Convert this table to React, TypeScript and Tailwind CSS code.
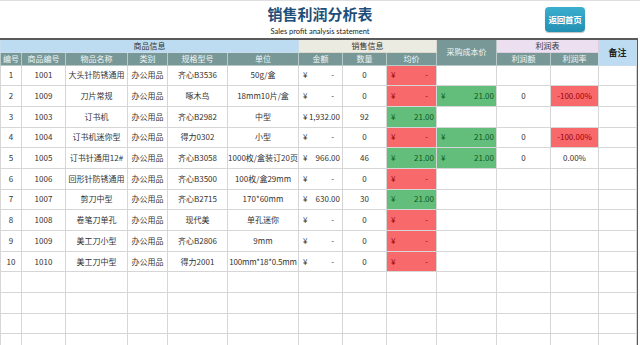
import { Fragment } from "react";

type Row = {
  no: string;
  code: string;
  name: string;
  cat: string;
  spec: string;
  unit: string;
  amount: string;
  qty: string;
  avg: "red" | "green";
  avgValue: string;
  cost?: string;
  profit?: string;
  rate?: string;
  rateRed?: boolean;
};

const rows: Row[] = [
  { no: "1", code: "1001", name: "大头针防锈通用", cat: "办公用品", spec: "齐心B3536", unit: "50g/盒", amount: "-", qty: "0", avg: "red", avgValue: "-" },
  { no: "2", code: "1009", name: "刀片常规", cat: "办公用品", spec: "啄木鸟", unit: "18mm10片/盒", amount: "-", qty: "0", avg: "red", avgValue: "-", cost: "21.00", profit: "0", rate: "-100.00%", rateRed: true },
  { no: "3", code: "1003", name: "订书机", cat: "办公用品", spec: "齐心B2982", unit: "中型", amount: "1,932.00", qty: "92", avg: "green", avgValue: "21.00" },
  { no: "4", code: "1004", name: "订书机迷你型", cat: "办公用品", spec: "得力0302", unit: "小型", amount: "-", qty: "0", avg: "red", avgValue: "-", cost: "21.00", profit: "0", rate: "-100.00%", rateRed: true },
  { no: "5", code: "1005", name: "订书针通用12#", cat: "办公用品", spec: "齐心B3058", unit: "1000枚/盒装订20页", amount: "966.00", qty: "46", avg: "green", avgValue: "21.00", cost: "21.00", profit: "0", rate: "0.00%" },
  { no: "6", code: "1006", name: "回形针防锈通用", cat: "办公用品", spec: "齐心B3500", unit: "100枚/盒29mm", amount: "-", qty: "0", avg: "red", avgValue: "-" },
  { no: "7", code: "1007", name: "剪刀中型", cat: "办公用品", spec: "齐心B2715", unit: "170*60mm", amount: "630.00", qty: "30", avg: "green", avgValue: "21.00" },
  { no: "8", code: "1008", name: "卷笔刀单孔", cat: "办公用品", spec: "现代美", unit: "单孔迷你", amount: "-", qty: "0", avg: "red", avgValue: "-" },
  { no: "9", code: "1009", name: "美工刀小型", cat: "办公用品", spec: "齐心B2806", unit: "9mm", amount: "-", qty: "0", avg: "red", avgValue: "-" },
  { no: "10", code: "1010", name: "美工刀中型", cat: "办公用品", spec: "得力2001", unit: "100mm*18*0.5mm", amount: "-", qty: "0", avg: "red", avgValue: "-" },
];

const cell = "p-0 border border-[#d6d6d6] text-center align-middle whitespace-nowrap overflow-hidden";
const sub = "p-0 border border-[#b9c9c8] bg-[#779896] text-[#f2f6f6] text-center font-normal";

const Money = ({ value, tone }: { value: string; tone?: "red" | "green" }) => {
  const color = tone === "red" ? "text-[#9c0006]" : tone === "green" ? "text-[#0b5a1f]" : "text-[#333]";
  return (
    <div className={`flex justify-between pl-[4px] ${value === "-" ? "pr-[8px]" : "pr-[2px]"} ${color}`}>
      <span>¥</span>
      <span>{value}</span>
    </div>
  );
};

export default function App() {
  return (
    <div className="w-[640px] h-[345px] overflow-hidden bg-white border-t border-[#dedede] font-['Noto_Sans_CJK_SC',sans-serif] text-[8px] text-[#333]">
      <div className="grid h-[37px] grid-cols-[1fr_auto_1fr]">
        <div />
        <div className="flex flex-col items-center pt-[4px]">
          <h1 className="text-[15px] font-bold leading-[18px] text-[#1e4f7a]">
            销售利润分析表
          </h1>
          <p className="mt-[5px] text-[7.5px] leading-[8px] text-[#222] font-['Lato',sans-serif]">
            Sales profit analysis statement
          </p>
        </div>
        <div className="flex justify-end pr-[55px] pt-[6px]">
          <button className="flex h-[25px] w-[40px] items-center justify-center rounded-[4px] bg-gradient-to-b from-[#3aaed0] to-[#2290b2] text-[8.5px] font-bold tracking-[-0.3px] text-white shadow-[0_1px_1px_rgba(0,0,0,0.25)]">
            返回首页
          </button>
        </div>
      </div>

      <div className="w-[638px] border-t-2 border-r-2 border-[#5a5a5a]">
        <table className="w-[636px] table-fixed border-collapse leading-none">
          <colgroup>
            <col className="w-[21px]" />
            <col className="w-[44px]" />
            <col className="w-[62px]" />
            <col className="w-[40px]" />
            <col className="w-[60px]" />
            <col className="w-[71px]" />
            <col className="w-[44px]" />
            <col className="w-[44px]" />
            <col className="w-[50px]" />
            <col className="w-[60px]" />
            <col className="w-[54px]" />
            <col className="w-[48px]" />
            <col className="w-[38px]" />
          </colgroup>
          <thead>
            <tr className="h-[12px]">
              <th colSpan={6} className="p-0 border border-[#c9dced] border-t-0 bg-[#bddcf2] font-normal text-[#333]">商品信息</th>
              <th colSpan={3} className="p-0 border border-[#dcdacf] border-t-0 bg-[#ecebe2] font-normal text-[#333]">销售信息</th>
              <th rowSpan={2} className={`${sub} border-t-0`}>采购成本价</th>
              <th colSpan={2} className="p-0 border border-[#dccfe2] border-t-0 bg-[#ecdff0] font-normal text-[#333]">利润表</th>
              <th rowSpan={2} className="p-0 border border-[#c9dced] border-t-0 bg-[#bddcf2] text-[9px] font-bold text-[#222]">备注</th>
            </tr>
            <tr className="h-[13px]">
              {["编号", "商品编号", "物品名称", "类别", "规格型号", "单位", "金额", "数量", "均价"].map((h) => (
                <th key={h} className={sub}>{h}</th>
              ))}
              <th className={sub}>利润额</th>
              <th className={sub}>利润率</th>
            </tr>
          </thead>
          <tbody>
            {rows.map((r) => (
              <tr key={r.no} className="h-[20.7px]">
                <td className={cell}>{r.no}</td>
                <td className={cell}>{r.code}</td>
                <td className={cell}>{r.name}</td>
                <td className={cell}>{r.cat}</td>
                <td className={cell}>{r.spec}</td>
                <td className={`${cell} ${r.unit.length > 12 ? "tracking-[-0.2px]" : ""}`}>{r.unit}</td>
                <td className={cell}><Money value={r.amount} /></td>
                <td className={cell}>{r.qty}</td>
                <td className={`${cell} ${r.avg === "red" ? "bg-[#f8696b]" : "bg-[#63be7b]"}`}>
                  <Money value={r.avgValue} tone={r.avg} />
                </td>
                <td className={`${cell} ${r.cost ? "bg-[#63be7b]" : ""}`}>
                  {r.cost ? <Money value={r.cost} tone="green" /> : null}
                </td>
                <td className={cell}>{r.profit ?? ""}</td>
                <td className={`${cell} ${r.rateRed ? "bg-[#f8696b] text-[#9c0006]" : ""}`}>{r.rate ?? ""}</td>
                <td className={cell} />
              </tr>
            ))}
            {[0, 1, 2, 3].map((i) => (
              <tr key={`empty-${i}`} className="h-[20.7px]">
                {Array.from({ length: 13 }).map((_, j) => (
                  <Fragment key={j}>
                    <td className={cell} />
                  </Fragment>
                ))}
              </tr>
            ))}
          </tbody>
        </table>
      </div>
    </div>
  );
}
